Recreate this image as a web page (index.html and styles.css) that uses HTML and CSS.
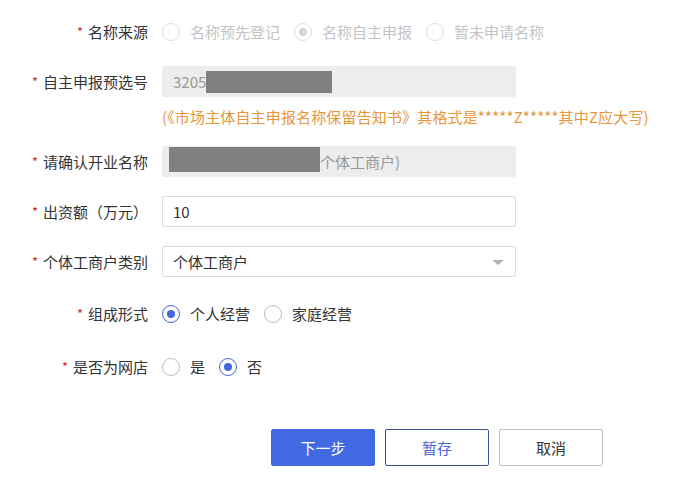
FILE: index.html
```html
<!DOCTYPE html>
<html lang="zh-CN">
<head>
    <meta charset="UTF-8">
    <title>个体工商户登记</title>
    <link rel="stylesheet" href="styles.css">
</head>
<body>
    <form class="reg-form">
        <div class="form-row row-name-src">
            <label class="label"><span class="req">*</span>名称来源</label>
            <div class="field radios disabled">
                <span class="radio-item"><span class="radio"></span>名称预先登记</span>
                <span class="radio-item"><span class="radio checked"></span>名称自主申报</span>
                <span class="radio-item"><span class="radio"></span>暂未申请名称</span>
            </div>
        </div>

        <div class="form-row row-preno">
            <label class="label"><span class="req">*</span>自主申报预选号</label>
            <div class="field">
                <div class="input readonly">3205<span class="mask mask-no"></span></div>
            </div>
        </div>
        <div class="hint">(《市场主体自主申报名称保留告知书》其格式是*****Z*****其中Z应大写)</div>

        <div class="form-row">
            <label class="label"><span class="req">*</span>请确认开业名称</label>
            <div class="field">
                <div class="input readonly tight"><span class="mask mask-name"></span>个体工商户)</div>
            </div>
        </div>

        <div class="form-row">
            <label class="label"><span class="req">*</span>出资额（万元）</label>
            <div class="field">
                <div class="input">10</div>
            </div>
        </div>

        <div class="form-row row-type">
            <label class="label"><span class="req">*</span>个体工商户类别</label>
            <div class="field">
                <div class="input select">个体工商户<span class="caret"></span></div>
            </div>
        </div>

        <div class="form-row row-radio">
            <label class="label"><span class="req">*</span>组成形式</label>
            <div class="field radios">
                <span class="radio-item"><span class="radio checked"></span>个人经营</span>
                <span class="radio-item"><span class="radio"></span>家庭经营</span>
            </div>
        </div>

        <div class="form-row row-radio">
            <label class="label"><span class="req">*</span>是否为网店</label>
            <div class="field radios">
                <span class="radio-item"><span class="radio"></span>是</span>
                <span class="radio-item"><span class="radio checked"></span>否</span>
            </div>
        </div>

        <div class="actions">
            <button type="button" class="btn btn-primary">下一步</button>
            <button type="button" class="btn btn-outline">暂存</button>
            <button type="button" class="btn btn-default">取消</button>
        </div>
    </form>
</body>
</html>
```

FILE: styles.css
```css
body {
    margin: 0;
    background: #fff;
    font-family: "Noto Sans CJK SC", "Liberation Sans", sans-serif;
    font-size: 15px;
    color: #333;
}
.reg-form {
    padding-top: 16px;
}
.form-row {
    display: flex;
    align-items: center;
    height: 31px;
    margin-bottom: 19px;
}
.row-preno {
    margin-bottom: 10px;
}
.row-type {
    margin-bottom: 21px;
}
.row-radio {
    margin-bottom: 22px;
}
.label {
    width: 148px;
    text-align: right;
    margin-right: 14px;
    white-space: nowrap;
    color: #333;
}
.req {
    color: #c9302c;
    font-size: 13px;
    margin-right: 5px;
    position: relative;
    top: -1px;
}
.field {
    width: 354px;
}
.input {
    box-sizing: border-box;
    height: 31px;
    border: 1px solid #dcdcdc;
    border-radius: 2px;
    padding: 0 10px;
    display: flex;
    align-items: center;
    color: #333;
    position: relative;
}
.input.readonly {
    background: #ededed;
    border-color: #ededed;
    color: #999;
}
.input.tight {
    padding-left: 6px;
}
.mask {
    display: inline-block;
    background: #808080;
}
.mask-no {
    width: 126px;
    height: 22px;
}
.mask-name {
    width: 151px;
    height: 25px;
    margin-top: -4px;
}
.caret {
    position: absolute;
    right: 11px;
    top: 13px;
    border-left: 6px solid transparent;
    border-right: 6px solid transparent;
    border-top: 5px solid #b3b3b3;
}
.hint {
    margin-left: 162px;
    height: 20px;
    line-height: 20px;
    color: #e8963a;
    margin-bottom: 19px;
    white-space: nowrap;
    letter-spacing: 0.15px;
}
.radios {
    display: flex;
    align-items: center;
    gap: 14px;
}
.radio-item {
    display: inline-flex;
    align-items: center;
    white-space: nowrap;
}
.radio {
    box-sizing: border-box;
    width: 18px;
    height: 18px;
    border: 1px solid #bdbdbd;
    border-radius: 50%;
    margin-right: 10px;
    display: inline-flex;
    align-items: center;
    justify-content: center;
}
.radio.checked {
    border-color: #4a66d8;
}
.radio.checked::after {
    content: "";
    width: 8px;
    height: 8px;
    border-radius: 50%;
    background: #4169e1;
}
.disabled {
    color: #c4c4c4;
}
.disabled .radio {
    border-color: #dedede;
}
.disabled .radio.checked::after {
    background: #d6d6d6;
}
.actions {
    display: flex;
    gap: 10px;
    margin-left: 271px;
    margin-top: 47px;
}
.btn {
    width: 104px;
    height: 37px;
    border-radius: 2px;
    font-family: inherit;
    font-size: 15px;
    background: #fff;
    cursor: pointer;
}
.btn-primary {
    background: #4169e1;
    border: 1px solid #4169e1;
    color: #fff;
}
.btn-outline {
    border: 1px solid #3c4f9c;
    color: #4a66d0;
}
.btn-default {
    border: 1px solid #bdbdbd;
    color: #333;
}
```
